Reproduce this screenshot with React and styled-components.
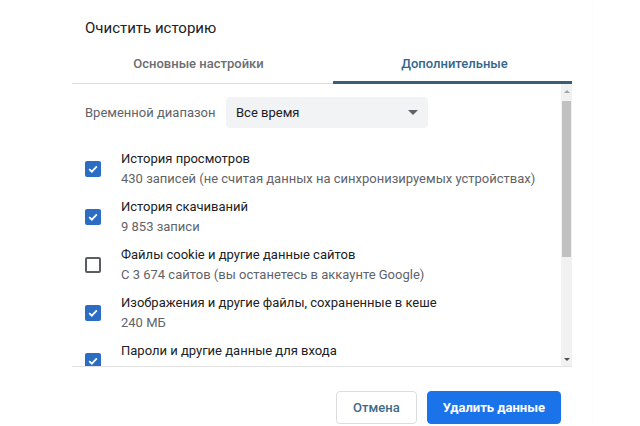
import React from 'react';
import styled, { createGlobalStyle } from 'styled-components';

const Global = createGlobalStyle`
  html, body {
    margin: 0;
    background: #fff;
    font-family: Roboto, "Liberation Sans", Arial, sans-serif;
  }
`;

const Dialog = styled.div`
  width: 500px;
  height: 426px;
  margin-left: 52px;
  padding: 0 20px;
  box-shadow: 0 0 3px rgba(0, 0, 0, 0.025);
  overflow: hidden;
`;

const Title = styled.div`
  padding: 18px 0 0 13px;
  height: 26px;
  font-size: 15px;
  line-height: 20px;
  color: #202124;
`;

const TabRow = styled.div`
  display: grid;
  grid-template-columns: 261px 239px;
  border-bottom: 1px solid #dadce0;
`;

const Tab = styled.div`
  position: relative;
  height: 39px;
  display: flex;
  align-items: center;
  justify-content: center;
  padding-right: ${p => (p.active ? 0 : 8)}px;
  padding-left: ${p => (p.active ? 4 : 0)}px;
  font-size: 13px;
  font-weight: 500;
  color: ${p => (p.active ? '#34668c' : '#6b6e72')};
  &::after {
    content: '';
    display: ${p => (p.active ? 'block' : 'none')};
    position: absolute;
    left: 0;
    right: 0;
    bottom: -1px;
    height: 3px;
    background: #3c5d78;
  }
`;

const ScrollArea = styled.div`
  display: flex;
  height: 282px;
  border-bottom: 1px solid #e3e3e3;
`;

const Content = styled.div`
  flex: 1;
  overflow: hidden;
  padding: 13px 0 0 13px;
`;

const Scrollbar = styled.div`
  width: 11px;
  display: flex;
  flex-direction: column;
  align-items: center;
  background: #f1f1f1;
`;

const Arrow = styled.div`
  height: 14px;
  display: flex;
  align-items: center;
  justify-content: center;
  svg { display: block; }
`;

const Track = styled.div`
  flex: 1;
  width: 100%;
  display: flex;
  justify-content: center;
`;

const Thumb = styled.div`
  width: 9px;
  height: 156px;
  margin-top: 3px;
  background: #c1c1c1;
`;

const RangeRow = styled.div`
  display: flex;
  align-items: center;
  height: 31px;
  margin-bottom: 17px;
`;

const RangeLabel = styled.div`
  width: 141px;
  font-size: 13px;
  color: #5f6368;
`;

const Select = styled.div`
  width: 202px;
  height: 31px;
  box-sizing: border-box;
  padding: 0 10px;
  display: flex;
  align-items: center;
  justify-content: space-between;
  background: #f1f3f4;
  border-radius: 4px;
  font-size: 13px;
  color: #202124;
`;

const Item = styled.div`
  display: flex;
  align-items: center;
  height: 48px;
`;

const Box = styled.div`
  width: 16px;
  height: 16px;
  box-sizing: border-box;
  border-radius: 2px;
  margin-right: 20px;
  flex-shrink: 0;
  display: flex;
  align-items: center;
  justify-content: center;
  background: ${p => (p.checked ? '#2b6dc2' : '#fff')};
  border: ${p => (p.checked ? 'none' : '2px solid #5a5d61')};
`;

const Text = styled.div`
  font-size: 13px;
  line-height: 20px;
  white-space: nowrap;
`;

const ItemTitle = styled.div`
  color: #202124;
`;

const ItemSub = styled.div`
  color: #5f6368;
`;

const Footer = styled.div`
  display: flex;
  justify-content: flex-end;
  gap: 10px;
  padding: 24px 11px 0 0;
`;

const Button = styled.button`
  height: 33px;
  padding: 0 ${p => (p.primary ? 15 : 16)}px;
  border-radius: 4px;
  font-family: inherit;
  font-size: 13px;
  font-weight: ${p => (p.primary ? 700 : 500)};
  border: 1px solid ${p => (p.primary ? '#1a73e8' : '#dadce0')};
  background: ${p => (p.primary ? '#1a73e8' : '#fff')};
  color: ${p => (p.primary ? '#fff' : '#3f6a88')};
`;

const items = [
  { title: 'История просмотров', sub: '430 записей (не считая данных на синхронизируемых устройствах)', checked: true },
  { title: 'История скачиваний', sub: '9 853 записи', checked: true },
  { title: 'Файлы cookie и другие данные сайтов', sub: 'С 3 674 сайтов (вы останетесь в аккаунте Google)', checked: false },
  { title: 'Изображения и другие файлы, сохраненные в кеше', sub: '240 МБ', checked: true },
  { title: 'Пароли и другие данные для входа', sub: 'Нет сохраненных паролей', checked: true },
];

const Check = () => (
  <svg width="12" height="12" viewBox="0 0 12 12">
    <path d="M2.2 6.2 L4.8 8.7 L9.8 3.4" fill="none" stroke="#fff" strokeWidth="1.8" />
  </svg>
);

const Caret = ({ up, size = 10, color = '#5f6368' }) => (
  <svg width={size} height={size / 2} viewBox="0 0 10 5">
    <path d={up ? 'M0 5 L5 0 L10 5 Z' : 'M0 0 L10 0 L5 5 Z'} fill={color} />
  </svg>
);

export default function App() {
  return (
    <Dialog>
      <Global />
      <Title>Очистить историю</Title>
      <TabRow>
        <Tab>Основные настройки</Tab>
        <Tab active>Дополнительные</Tab>
      </TabRow>
      <ScrollArea>
        <Content>
          <RangeRow>
            <RangeLabel>Временной диапазон</RangeLabel>
            <Select>
              <span>Все время</span>
              <Caret />
            </Select>
          </RangeRow>
          {items.map(it => (
            <Item key={it.title}>
              <Box checked={it.checked}>{it.checked && <Check />}</Box>
              <Text>
                <ItemTitle>{it.title}</ItemTitle>
                <ItemSub>{it.sub}</ItemSub>
              </Text>
            </Item>
          ))}
        </Content>
        <Scrollbar>
          <Arrow><Caret up size={6} color="#a3a3a3" /></Arrow>
          <Track><Thumb /></Track>
          <Arrow><Caret size={6} color="#505050" /></Arrow>
        </Scrollbar>
      </ScrollArea>
      <Footer>
        <Button>Отмена</Button>
        <Button primary>Удалить данные</Button>
      </Footer>
    </Dialog>
  );
}
